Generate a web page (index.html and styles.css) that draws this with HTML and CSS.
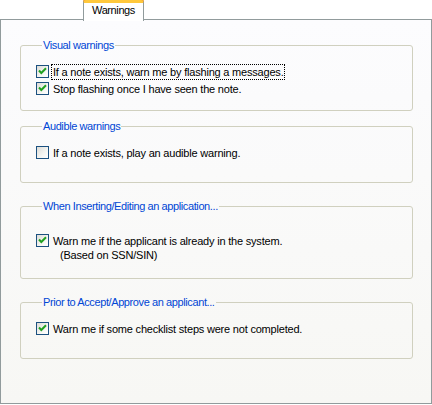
FILE: index.html
```html
<!DOCTYPE html>
<html>

<head>
    <meta charset="utf-8" />
    <title>Warnings</title>
    <link rel="stylesheet" href="styles.css">
</head>

<body>
    <div class="tabs">
        <div class="tab active">Warnings</div>
    </div>

    <div class="page">
        <fieldset class="group first">
            <legend>Visual warnings</legend>
            <label class="check">
                <span class="box"><svg viewBox="0 0 11 11"><path d="M2 4.5 L4.3 7 L9 2.2" /></svg></span>
                <span class="text focus">If a note exists, warn me by flashing a messages.</span>
            </label>
            <label class="check">
                <span class="box"><svg viewBox="0 0 11 11"><path d="M2 4.5 L4.3 7 L9 2.2" /></svg></span>
                <span class="text">Stop flashing once I have seen the note.</span>
            </label>
        </fieldset>

        <fieldset class="group single">
            <legend>Audible warnings</legend>
            <label class="check">
                <span class="box"></span>
                <span class="text">If a note exists, play an audible warning.</span>
            </label>
        </fieldset>

        <fieldset class="group tall">
            <legend>When Inserting/Editing an application...</legend>
            <label class="check">
                <span class="box"><svg viewBox="0 0 11 11"><path d="M2 4.5 L4.3 7 L9 2.2" /></svg></span>
                <span class="text">Warn me if the applicant is already in the system.
                    <span class="note">(Based on SSN/SIN)</span></span>
            </label>
        </fieldset>

        <fieldset class="group single">
            <legend>Prior to Accept/Approve an applicant...</legend>
            <label class="check">
                <span class="box"><svg viewBox="0 0 11 11"><path d="M2 4.5 L4.3 7 L9 2.2" /></svg></span>
                <span class="text">Warn me if some checklist steps were not completed.</span>
            </label>
        </fieldset>
    </div>
</body>

</html>
```

FILE: styles.css
```css
body {
    margin: 0;
    background-color: white;
    font-family: "Liberation Sans", Arial, sans-serif;
    font-size: 11px;
    color: black;
}

.tabs {
    height: 20px;
    padding-left: 83px;
    margin-bottom: -1px;
    position: relative;
}

.tab {
    width: 59px;
    height: 18px;
    border-top: 3px solid #ffc83c;
    border-left: 1px solid #919b9c;
    border-right: 1px solid #919b9c;
    border-radius: 3px 3px 0 0;
    background-color: white;
    text-align: center;
    line-height: 15px;
    letter-spacing: -0.4px;
    box-shadow: 0 -1px 0 #e68b2c;
}

.page {
    box-sizing: border-box;
    height: 385px;
    border: 1px solid #919b9c;
    background: linear-gradient(#fcfcfe, #f7f7f4);
}

.group {
    margin: 17px 18px 0 19px;
    padding: 11px 0 21px 15px;
    border: 1px solid #d0d0bf;
    border-radius: 3px;
}

.group legend {
    margin-left: 6px;
    padding: 0 1px;
    line-height: 13px;
    letter-spacing: -0.4px;
    color: #0046d5;
}

.group.first {
    margin-top: 19px;
    padding-bottom: 13px;
}

.group.first + .group {
    margin-top: 9px;
}

.group.tall {
    padding-top: 19px;
    padding-bottom: 15px;
}

.check {
    display: flex;
    align-items: flex-start;
    min-height: 17px;
}

.box {
    box-sizing: border-box;
    width: 13px;
    height: 13px;
    margin-top: 2px;
    border: 1px solid #1c5180;
    background: linear-gradient(135deg, #dcdcd7, #f6f6f3 60%, white);
}

.box svg {
    display: block;
    width: 11px;
    height: 11px;
}

.box path {
    fill: none;
    stroke: #21a121;
    stroke-width: 2;
}

.text {
    margin: 1px 0 0 2px;
    padding: 0 1px;
    border: 1px dotted transparent;
    line-height: 14px;
    letter-spacing: -0.2px;
}

.text.focus {
    border-color: black;
}

.note {
    display: block;
    padding-left: 7px;
}
```
